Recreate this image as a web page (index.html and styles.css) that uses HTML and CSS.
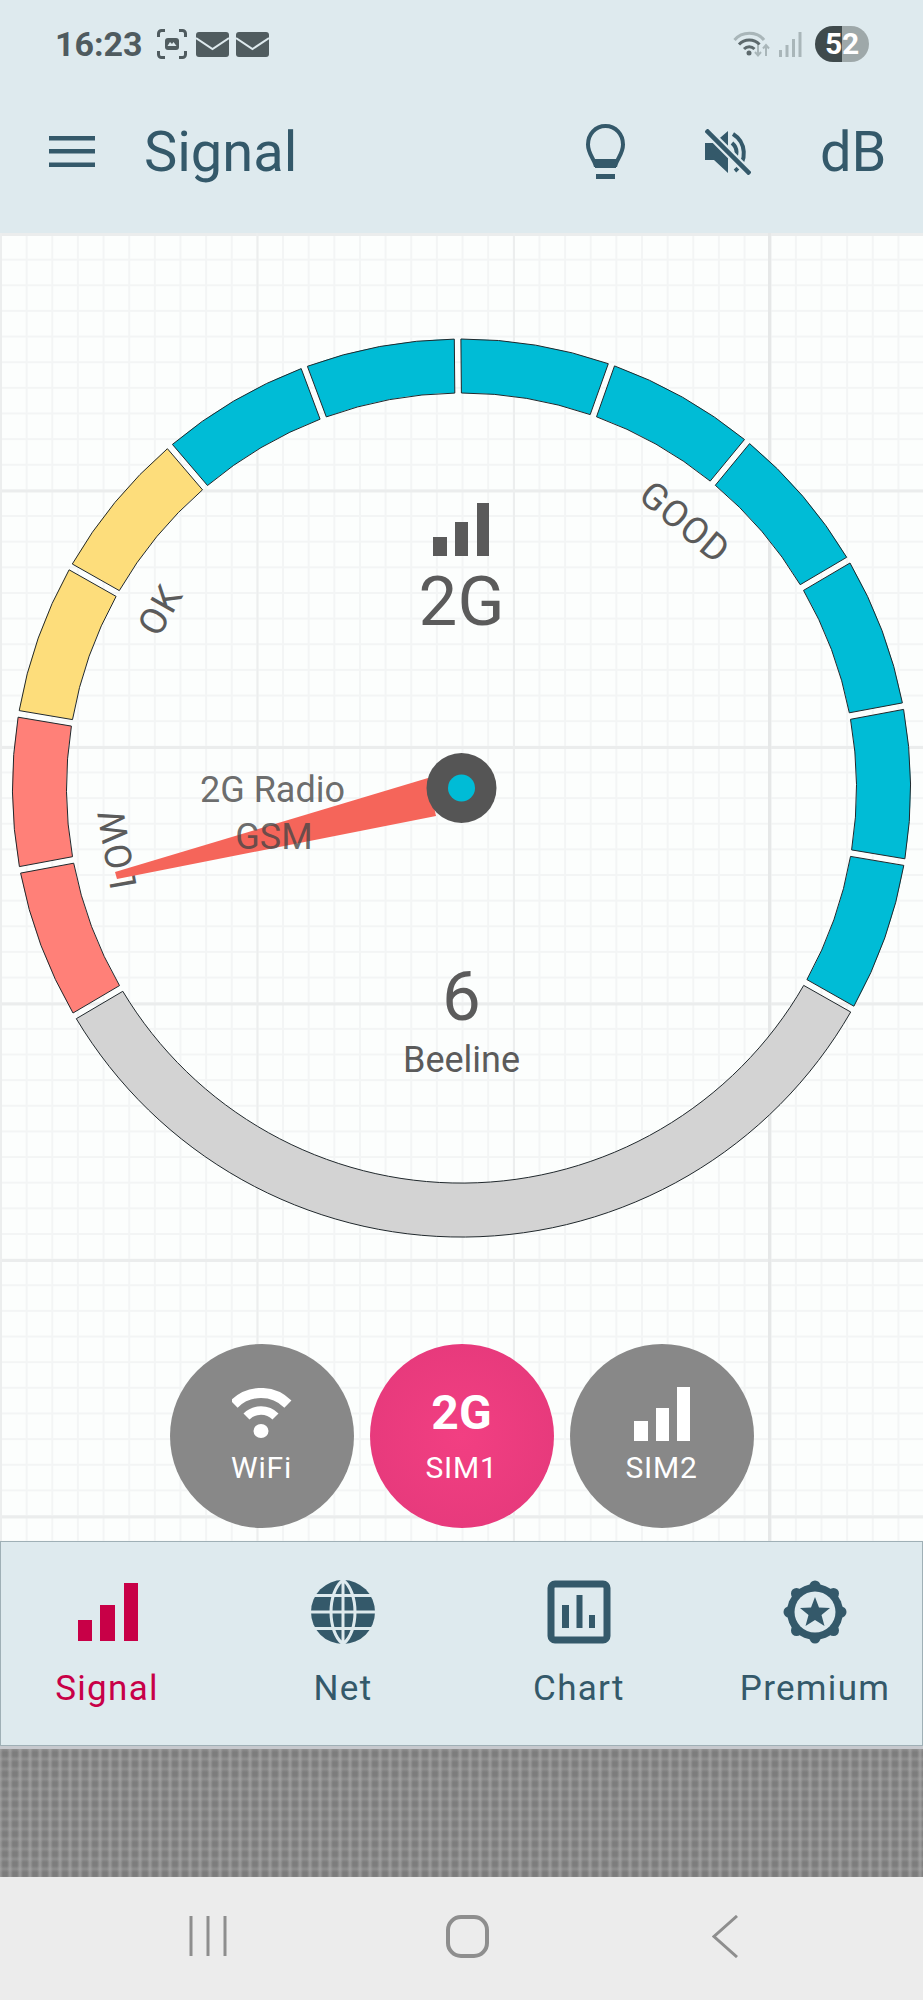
FILE: index.html
```html
<!DOCTYPE html>
<html lang="en">
<head>
    <meta charset="UTF-8">
    <meta name="viewport" content="width=device-width, initial-scale=1.0">
    <title>Signal</title>
    <link rel="stylesheet" href="styles.css">
</head>
<body>
    <div class="statusbar">
        <div class="status-left">
            <span class="time">16:23</span>
            <svg class="shot-icon" width="30" height="30" viewBox="0 0 30 30">
                <path class="line" d="M1.500 8V4.500a3 3 0 0 1 3-3H8M22 1.500h3.500a3 3 0 0 1 3 3V8M28.500 22v3.500a3 3 0 0 1-3 3H22M8 28.500H4.500a3 3 0 0 1-3-3V22"/>
                <rect class="solid" x="8" y="9" width="14" height="12" rx="3"/>
                <path class="cut" d="M10.500 17l2.500-4 2 2 1.500-2 3 4z"/>
            </svg>
            <svg class="mail-icon" width="33" height="25" viewBox="0 0 33 25">
                <rect class="solid" width="33" height="25" rx="3"/>
                <path class="v" d="M0 6l16.500 11L33 6"/>
            </svg>
            <svg class="mail-icon" width="33" height="25" viewBox="0 0 33 25">
                <rect class="solid" width="33" height="25" rx="3"/>
                <path class="v" d="M0 6l16.500 11L33 6"/>
            </svg>
        </div>
        <div class="status-right">
            <svg class="wifi-small" width="39" height="28" viewBox="0 0 39 28">
                <path class="far" d="M1.500 10C9 1 24 1 31 10"/>
                <path class="near" d="M6 14.500C11.500 8.500 21 8.500 26.500 14.500"/>
                <path class="near" d="M11 19C14 16 18.500 16 21.500 19"/>
                <circle class="dot" cx="16" cy="23" r="2.500"/>
                <path class="far thin" d="M25 15v10M22 22l3 3.500 3-3.500M33 26V15M30 18.500l3-3.500 3 3.500"/>
            </svg>
            <svg class="bars-small" width="23" height="25" viewBox="0 0 23 25">
                <rect x="0" y="18" width="3" height="7"/>
                <rect x="6.500" y="13" width="3" height="12"/>
                <rect x="13" y="7" width="3" height="18"/>
                <rect x="19.500" y="0" width="3" height="25"/>
            </svg>
            <div class="battery"><span>5</span><span>2</span></div>
        </div>
    </div>

    <div class="toolbar">
        <svg class="menu-icon" width="46" height="31" viewBox="0 0 46 31">
            <rect width="46" height="4.500"/>
            <rect y="13" width="46" height="4.500"/>
            <rect y="26.500" width="46" height="4.500"/>
        </svg>
        <span class="toolbar-title">Signal</span>
        <svg class="bulb-icon" width="39" height="55" viewBox="0 0 39 55">
            <path class="line" d="M19.500 2C9.500 2 2 10 2 20.500c0 9 5.500 13.500 7.500 20.500h20c2-7 7.500-11.500 7.500-20.500C37 10 29.500 2 19.500 2z"/>
            <rect x="9" y="35" width="21" height="9"/>
            <rect x="10" y="50" width="19" height="5"/>
        </svg>
        <svg class="mute-icon" width="46" height="46" viewBox="0 0 46 46">
            <path class="solid" d="M0 14h9L23 2v42L9 31H0z"/>
            <path class="line" d="M28 5c13 8 15 27 2 37M27 14c6 5 6 13 0 18"/>
            <path class="slash-bg" d="M1 1l44 44"/>
            <path class="slash" d="M1 1l44 44"/>
        </svg>
        <span class="toolbar-db">dB</span>
    </div>

    <div class="main">
        <svg class="dial" width="923" height="1111" viewBox="0 233 923 1111">
            <g id="ring"></g>
            <rect class="dial-ink" x="433" y="537" width="14" height="19"/>
            <rect class="dial-ink" x="455" y="522" width="13" height="34"/>
            <rect class="dial-ink" x="477" y="503" width="12" height="53"/>
            <text class="dial-big" x="461.500" y="625">2G</text>
            <text class="dial-big" x="461.500" y="1020">6</text>
            <text class="dial-small" x="461.500" y="1072">Beeline</text>
            <text class="dial-zone" x="685" y="535" transform="rotate(40 685 522)">GOOD</text>
            <text class="dial-zone" x="160" y="623" transform="rotate(-60 160 610)">OK</text>
            <text class="dial-zone" x="117" y="862" transform="rotate(-100 117 849)">LOW</text>
            <polygon class="needle" points="115,872 117,879 436,816 428,778"/>
            <text class="dial-small over" x="272.500" y="802">2G Radio</text>
            <text class="dial-small over" x="274" y="849">GSM</text>
            <circle class="hub" cx="461.500" cy="788" r="35"/>
            <circle class="hub-dot" cx="461.500" cy="788" r="13.500"/>
        </svg>

        <div class="sources">
            <div class="source">
                <svg class="source-icon" width="60" height="50" viewBox="0 0 60 50">
                    <path class="arc-outer" d="M2.100 16.100a38 38 0 0 1 53.800 0"/>
                    <path class="arc-inner" d="M14.500 28.500a20.500 20.500 0 0 1 29 0"/>
                    <ellipse class="arc-dot" cx="29" cy="43" rx="7.500" ry="7"/>
                </svg>
                <span class="source-label">WiFi</span>
            </div>
            <div class="source active">
                <span class="source-tech">2G</span>
                <span class="source-label">SIM1</span>
            </div>
            <div class="source">
                <svg class="source-icon bars" width="56" height="54" viewBox="0 0 56 54">
                    <rect x="0" y="34" width="14" height="20"/>
                    <rect x="22" y="21" width="13" height="33"/>
                    <rect x="43" y="0" width="13" height="54"/>
                </svg>
                <span class="source-label">SIM2</span>
            </div>
        </div>
    </div>

    <div class="tabs">
        <div class="tab current">
            <svg width="64" height="64" viewBox="0 0 64 64">
                <rect x="3" y="40" width="14" height="21"/>
                <rect x="25" y="25" width="15" height="36"/>
                <rect x="49" y="3" width="14" height="58"/>
            </svg>
            <span>Signal</span>
        </div>
        <div class="tab">
            <svg width="64" height="64" viewBox="0 0 64 64">
                <circle cx="32" cy="32" r="32"/>
                <path class="globe-lines" d="M0 15.500h64M0 32h64M0 48.500h64M32 0v64M32 0C16 12 16 52 32 64M32 0c16 12 16 52 0 64"/>
            </svg>
            <span>Net</span>
        </div>
        <div class="tab">
            <svg width="64" height="64" viewBox="0 0 64 64">
                <rect class="chart-box" x="4" y="4" width="56" height="56" rx="4"/>
                <rect x="15" y="25" width="7" height="23"/>
                <rect x="29.500" y="15" width="6" height="33"/>
                <rect x="42" y="35" width="6" height="13"/>
            </svg>
            <span>Chart</span>
        </div>
        <div class="tab">
            <svg width="64" height="64" viewBox="0 0 64 64">
                <circle cx="32" cy="32" r="28"/>
                <circle cx="32" cy="6" r="5.500"/>
                <circle cx="32" cy="58" r="5.500"/>
                <circle cx="6" cy="32" r="5.500"/>
                <circle cx="58" cy="32" r="5.500"/>
                <circle cx="13.500" cy="13.500" r="5.500"/>
                <circle cx="50.500" cy="13.500" r="5.500"/>
                <circle cx="13.500" cy="50.500" r="5.500"/>
                <circle cx="50.500" cy="50.500" r="5.500"/>
                <circle class="badge-hole" cx="32" cy="32" r="20.500"/>
                <polygon points="32,17 36,27.500 47,28 38.500,35 41.500,46 32,40 22.500,46 25.500,35 17,28 28,27.500"/>
            </svg>
            <span>Premium</span>
        </div>
    </div>

    <div class="ad-edge"></div>
    <div class="ad"></div>

    <div class="navbar">
        <svg width="38" height="42" viewBox="0 0 38 42">
            <path d="M2 1v40M19 1v40M36 1v40"/>
        </svg>
        <svg class="nav-home" width="43" height="43" viewBox="0 0 43 43">
            <rect x="2" y="2" width="39" height="39" rx="13"/>
        </svg>
        <svg class="nav-back" width="28" height="43" viewBox="0 0 28 43">
            <path d="M25 1L2 21.500 25 42"/>
        </svg>
    </div>

    <script src="gauge.js"></script>
</body>
</html>
```

FILE: styles.css
```css
* {
    box-sizing: border-box;
}

body {
    margin: 0;
    width: 923px;
    height: 2000px;
    overflow: hidden;
    display: flex;
    flex-direction: column;
    font-family: Roboto, "Liberation Sans", sans-serif;
    background: #fcfefe;
}

svg {
    display: block;
    flex: none;
}

/* status bar */
.statusbar {
    height: 88px;
    display: flex;
    align-items: center;
    justify-content: space-between;
    padding: 0 54px 0 55px;
    background: #deeaee;
}

.status-left,
.status-right {
    display: flex;
    align-items: center;
}

.time {
    width: 102px;
    font-size: 34px;
    font-weight: 700;
    color: #4f5b5f;
}

.shot-icon {
    margin-right: 9px;
}

.shot-icon .line {
    fill: none;
    stroke: #4f5b5f;
    stroke-width: 3;
}

.shot-icon .solid,
.mail-icon .solid {
    fill: #505c5f;
}

.shot-icon .cut {
    fill: #deeaee;
}

.mail-icon {
    margin-right: 7px;
}

.mail-icon .v {
    fill: none;
    stroke: #deeaee;
    stroke-width: 2;
}

.wifi-small {
    margin-right: 7px;
}

.wifi-small path {
    fill: none;
    stroke-width: 3;
}

.wifi-small .far {
    stroke: #a9b6b9;
}

.wifi-small .thin {
    stroke-width: 2;
}

.wifi-small .near {
    stroke: #5d696c;
}

.wifi-small .dot {
    fill: #5d696c;
}

.bars-small {
    fill: #a9b6b9;
    margin-right: 13px;
}

.battery {
    width: 54px;
    height: 36px;
    display: flex;
    border-radius: 18px;
    overflow: hidden;
    font-size: 30px;
    font-weight: 700;
    line-height: 36px;
    color: #fff;
}

.battery span {
    width: 27px;
    padding-left: 10px;
    background: #3f4a4c;
}

.battery span + span {
    padding-left: 0;
    background: #9ea8a9;
}

/* toolbar */
.toolbar {
    height: 145px;
    display: flex;
    align-items: center;
    padding: 0 0 18px 49px;
    background: #deeaee;
    color: #34596a;
}

.menu-icon {
    fill: #34596a;
    margin-right: 49px;
}

.toolbar-title {
    width: 442px;
    font-size: 56px;
    line-height: 60px;
}

.bulb-icon {
    fill: #34596a;
    margin-right: 80px;
}

.bulb-icon .line {
    fill: none;
    stroke: #34596a;
    stroke-width: 4;
}

.mute-icon {
    margin-right: 69px;
}

.mute-icon .solid {
    fill: #34596a;
}

.mute-icon .line {
    fill: none;
    stroke: #34596a;
    stroke-width: 4;
}

.mute-icon .slash-bg {
    stroke: #deeaee;
    stroke-width: 9;
}

.mute-icon .slash {
    stroke: #34596a;
    stroke-width: 4.500;
}

.toolbar-db {
    font-size: 56px;
    line-height: 60px;
}

/* dial */
.main {
    flex: 1;
    overflow: hidden;
    background-color: #fcfefd;
    background-image:
        linear-gradient(#e6e8e8, #e6e8e8),
        linear-gradient(90deg, #eceeee 2px, transparent 2px),
        linear-gradient(#ebeded 3px, transparent 3px),
        linear-gradient(90deg, #f3f5f5 2px, transparent 2px),
        linear-gradient(#f3f5f5 2px, transparent 2px);
    background-size: 3px 100%, 256.500px 256.500px, 256.500px 256.500px, 25.650px 25.650px, 25.650px 25.650px;
    background-position: 768px 0, 0 0, 0 0, 0 0, 0 0;
    background-repeat: no-repeat, repeat, repeat, repeat, repeat;
}

.seg {
    stroke: #20282c;
    stroke-width: 1;
}

.seg-good {
    fill: #00bcd6;
}

.seg-ok {
    fill: #fddd7b;
}

.seg-low {
    fill: #ff8078;
}

.seg-off {
    fill: #d3d3d3;
}

.dial text {
    text-anchor: middle;
    fill: #5b5b5b;
}

.dial-ink {
    fill: #5a5a5a;
}

.dial .dial-big {
    font-size: 69px;
}

.dial .dial-small {
    font-size: 36px;
}

.dial .dial-zone {
    font-size: 37px;
    letter-spacing: 1px;
}

.dial .over {
    fill: rgba(70, 70, 70, 0.8);
}

.needle {
    fill: #f5655a;
}

.hub {
    fill: #555;
}

.hub-dot {
    fill: #00bcd6;
}

/* wifi / sim buttons */
.sources {
    display: flex;
    justify-content: center;
    gap: 16px;
}

.source {
    width: 184px;
    height: 184px;
    display: flex;
    flex-direction: column;
    align-items: center;
    justify-content: flex-end;
    padding-bottom: 43px;
    border-radius: 50%;
    background: #888;
    color: #fff;
    fill: #fff;
}

.source.active {
    background: radial-gradient(circle, #f23f82 0%, #e3387a 100%);
}

.source-icon {
    margin-bottom: 13px;
}

.source-icon.bars {
    margin-bottom: 10px;
}

.source-icon path {
    fill: none;
    stroke: #fff;
}

.source-icon .arc-outer {
    stroke-width: 10;
}

.source-icon .arc-inner {
    stroke-width: 8.500;
}

.source-label {
    font-size: 30px;
    line-height: 34px;
    letter-spacing: 0.800px;
}

.source-tech {
    font-size: 48px;
    font-weight: 700;
    line-height: 56px;
    margin-bottom: 10px;
}

/* bottom tabs */
.tabs {
    height: 205px;
    display: flex;
    justify-content: space-between;
    padding: 38px 17px 0 16px;
    border: 1px solid #9fb0b6;
    background: #deeaee;
}

.tab {
    width: 180px;
    display: flex;
    flex-direction: column;
    align-items: center;
    fill: #34596a;
    color: #34596a;
    font-size: 35px;
    line-height: 42px;
    letter-spacing: 1.300px;
}

.tab svg {
    margin-bottom: 24px;
}

.tab.current {
    fill: #c80047;
    color: #c80047;
}

.globe-lines {
    fill: none;
    stroke: #deeaee;
    stroke-width: 3;
}

.tab .chart-box {
    fill: none;
    stroke: #34596a;
    stroke-width: 7;
}

.badge-hole {
    fill: #deeaee;
}

/* ad strip */
.ad-edge {
    height: 3px;
    background: #c6c8cd;
}

.ad {
    height: 128px;
    background-color: #7d7d7d;
    background-image:
        linear-gradient(90deg, rgba(175, 175, 175, 0.6), transparent 30%, transparent 70%, rgba(175, 175, 175, 0.6)),
        linear-gradient(rgba(165, 165, 165, 0.45), transparent 30%, transparent 70%, rgba(165, 165, 165, 0.45));
    background-size: 10px 10px;
}

/* android nav */
.navbar {
    height: 123px;
    display: flex;
    align-items: flex-start;
    padding: 38px 0 0 189px;
    background: #ececec;
}

.navbar svg {
    margin-right: 219px;
}

.navbar path {
    fill: none;
    stroke: #8e8e8e;
    stroke-width: 3;
}

.navbar .nav-home {
    margin-right: 223px;
}

.nav-home rect {
    fill: none;
    stroke: #8e8e8e;
    stroke-width: 4;
}
```

FILE: gauge.js
```js
// draws the 12 coloured segments and the grey "off" arc of the dial
const cx = 461.5, cy = 788;
const outer = 449, inner = 395;
const gap = 3.3;

function point(r, deg) {
    const a = deg * Math.PI / 180;
    return (cx + r * Math.sin(a)).toFixed(1) + ' ' + (cy - r * Math.cos(a)).toFixed(1);
}

function segment(from, to, cls) {
    const oGap = Math.asin(gap / outer) * 180 / Math.PI;
    const iGap = Math.asin(gap / inner) * 180 / Math.PI;
    const big = to - from > 180 ? 1 : 0;
    const d = 'M' + point(outer, from + oGap) +
        ' A' + outer + ' ' + outer + ' 0 ' + big + ' 1 ' + point(outer, to - oGap) +
        ' L' + point(inner, to - iGap) +
        ' A' + inner + ' ' + inner + ' 0 ' + big + ' 0 ' + point(inner, from + iGap) + ' Z';
    const path = document.createElementNS('http://www.w3.org/2000/svg', 'path');
    path.setAttribute('d', d);
    path.setAttribute('class', 'seg ' + cls);
    document.getElementById('ring').appendChild(path);
}

for (let i = 0; i < 12; i++) {
    const from = -120.5 + i * 20;
    let cls = 'seg-good';
    if (i < 2) cls = 'seg-low';
    else if (i < 4) cls = 'seg-ok';
    segment(from, from + 20, cls);
}
segment(119.5, 239.5, 'seg-off');
```
